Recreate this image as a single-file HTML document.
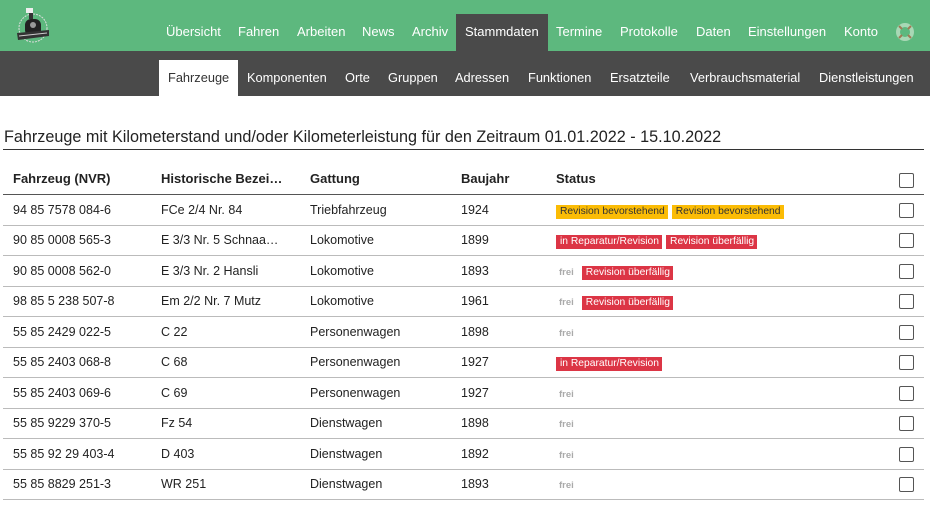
<!DOCTYPE html>
<html><head><meta charset="utf-8"><style>
*{box-sizing:border-box;margin:0;padding:0}
body{width:930px;height:510px;overflow:hidden;background:#fff;font-family:"Liberation Sans",Arial,sans-serif;color:#222;position:relative}
.top{position:absolute;left:0;top:0;width:930px;height:51px;background:#5db87e}
.top a{position:absolute;top:14px;height:37px;line-height:35px;color:#fff;font-size:13px;text-decoration:none}
.top a.act{background:#4a4a4a;padding:0 9px}
.sub{position:absolute;left:0;top:51px;width:930px;height:45px;background:#4a4a4a}
.sub a{position:absolute;top:9px;height:36px;line-height:36px;color:#fff;font-size:12.8px}
.sub a.act{background:#fff;color:#333;padding:0 9px}
h1{position:absolute;left:4px;top:128px;font-size:16.2px;font-weight:normal;color:#222}
.hl{position:absolute;left:3px;top:149px;width:921px;border-top:1px solid #333}
.row{position:absolute;left:3px;width:921px;height:31px;border-bottom:1px solid #bbb;font-size:12.5px}
.row span{position:absolute;top:8px;white-space:nowrap}
.row span.st{top:9px}
.hd{font-weight:bold;font-size:13px;height:46px}
.hd span{top:22px}
.cb{position:absolute;left:896px;width:15px;height:15px;border:1px solid #555;background:#fff;border-radius:2px}
.b{display:inline-block;font-size:10.3px;color:#fff;padding:1px 3px 1px 4px;margin-right:4px;line-height:12px;font-style:normal;vertical-align:middle}
.y{background:#fbbc05;color:#333}.r{background:#dc3545}
.f{font-size:9.5px;font-weight:bold;color:#aaa;margin:0 8px 0 3px;font-style:normal;vertical-align:middle}
</style></head><body>
<div class="top">
<svg style="position:absolute;left:15px;top:5px" width="36" height="40" viewBox="0 0 36 40"><circle cx="18" cy="23" r="14" fill="none" stroke="#ddd" stroke-width="1" stroke-dasharray="2 1"/><rect x="11" y="3" width="7" height="5" fill="#eee"/><rect x="14" y="8" width="4" height="6" fill="#333"/><rect x="10" y="14" width="16" height="17" rx="6" fill="#222"/><circle cx="18" cy="20" r="3" fill="#999"/><path d="M2 28 L34 25 L34 31 L3 35Z" fill="#333"/><path d="M4 31 L32 28" stroke="#ccc" stroke-width="1"/></svg>
<a style="left:166px">Übersicht</a><a style="left:238px">Fahren</a><a style="left:297px">Arbeiten</a><a style="left:362px">News</a><a style="left:412px">Archiv</a><a class="act" style="left:456px">Stammdaten</a><a style="left:556px">Termine</a><a style="left:620px">Protokolle</a><a style="left:696px">Daten</a><a style="left:748px">Einstellungen</a><a style="left:844px">Konto</a>
<svg style="position:absolute;left:895px;top:22px" width="20" height="20" viewBox="0 0 20 20"><circle cx="10" cy="10" r="7" fill="none" stroke="#a8d8b5" stroke-width="4"/><path d="M4 4L7 7M16 4L13 7M4 16L7 13M16 16L13 13" stroke="#a07a55" stroke-width="2"/></svg>
</div>
<div class="sub">
<a class="act" style="left:159px">Fahrzeuge</a><a style="left:247px">Komponenten</a><a style="left:345px">Orte</a><a style="left:388px">Gruppen</a><a style="left:455px">Adressen</a><a style="left:528px">Funktionen</a><a style="left:610px">Ersatzteile</a><a style="left:690px">Verbrauchsmaterial</a><a style="left:819px">Dienstleistungen</a>
</div>
<h1>Fahrzeuge mit Kilometerstand und/oder Kilometerleistung für den Zeitraum 01.01.2022 - 15.10.2022</h1>
<div class="hl"></div>
<div class="row hd" style="top:149px;border-bottom-color:#555"><span style="left:10px">Fahrzeug (NVR)</span><span style="left:158px">Historische Bezei…</span><span style="left:307px">Gattung</span><span style="left:458px">Baujahr</span><span style="left:553px">Status</span><div class="cb" style="top:24px"></div></div>
<div class="row" style="top:195px"><span style="left:10px">94 85 7578 084-6</span><span style="left:158px">FCe 2/4 Nr. 84</span><span style="left:307px">Triebfahrzeug</span><span style="left:458px">1924</span><span class="st" style="left:553px"><i class="b y">Revision bevorstehend</i><i class="b y">Revision bevorstehend</i></span><div class="cb" style="top:8px"></div></div>
<div class="row" style="top:225px"><span style="left:10px">90 85 0008 565-3</span><span style="left:158px">E 3/3 Nr. 5 Schnaa…</span><span style="left:307px">Lokomotive</span><span style="left:458px">1899</span><span class="st" style="left:553px"><i class="b r">in Reparatur/Revision</i><i class="b r">Revision überfällig</i></span><div class="cb" style="top:8px"></div></div>
<div class="row" style="top:256px"><span style="left:10px">90 85 0008 562-0</span><span style="left:158px">E 3/3 Nr. 2 Hansli</span><span style="left:307px">Lokomotive</span><span style="left:458px">1893</span><span class="st" style="left:553px"><i class="f">frei</i><i class="b r">Revision überfällig</i></span><div class="cb" style="top:8px"></div></div>
<div class="row" style="top:286px"><span style="left:10px">98 85 5 238 507-8</span><span style="left:158px">Em 2/2 Nr. 7 Mutz</span><span style="left:307px">Lokomotive</span><span style="left:458px">1961</span><span class="st" style="left:553px"><i class="f">frei</i><i class="b r">Revision überfällig</i></span><div class="cb" style="top:8px"></div></div>
<div class="row" style="top:317px"><span style="left:10px">55 85 2429 022-5</span><span style="left:158px">C 22</span><span style="left:307px">Personenwagen</span><span style="left:458px">1898</span><span class="st" style="left:553px"><i class="f">frei</i></span><div class="cb" style="top:8px"></div></div>
<div class="row" style="top:347px"><span style="left:10px">55 85 2403 068-8</span><span style="left:158px">C 68</span><span style="left:307px">Personenwagen</span><span style="left:458px">1927</span><span class="st" style="left:553px"><i class="b r">in Reparatur/Revision</i></span><div class="cb" style="top:8px"></div></div>
<div class="row" style="top:378px"><span style="left:10px">55 85 2403 069-6</span><span style="left:158px">C 69</span><span style="left:307px">Personenwagen</span><span style="left:458px">1927</span><span class="st" style="left:553px"><i class="f">frei</i></span><div class="cb" style="top:8px"></div></div>
<div class="row" style="top:408px"><span style="left:10px">55 85 9229 370-5</span><span style="left:158px">Fz 54</span><span style="left:307px">Dienstwagen</span><span style="left:458px">1898</span><span class="st" style="left:553px"><i class="f">frei</i></span><div class="cb" style="top:8px"></div></div>
<div class="row" style="top:439px"><span style="left:10px">55 85 92 29 403-4</span><span style="left:158px">D 403</span><span style="left:307px">Dienstwagen</span><span style="left:458px">1892</span><span class="st" style="left:553px"><i class="f">frei</i></span><div class="cb" style="top:8px"></div></div>
<div class="row" style="top:469px"><span style="left:10px">55 85 8829 251-3</span><span style="left:158px">WR 251</span><span style="left:307px">Dienstwagen</span><span style="left:458px">1893</span><span class="st" style="left:553px"><i class="f">frei</i></span><div class="cb" style="top:8px"></div></div>
</body></html>
